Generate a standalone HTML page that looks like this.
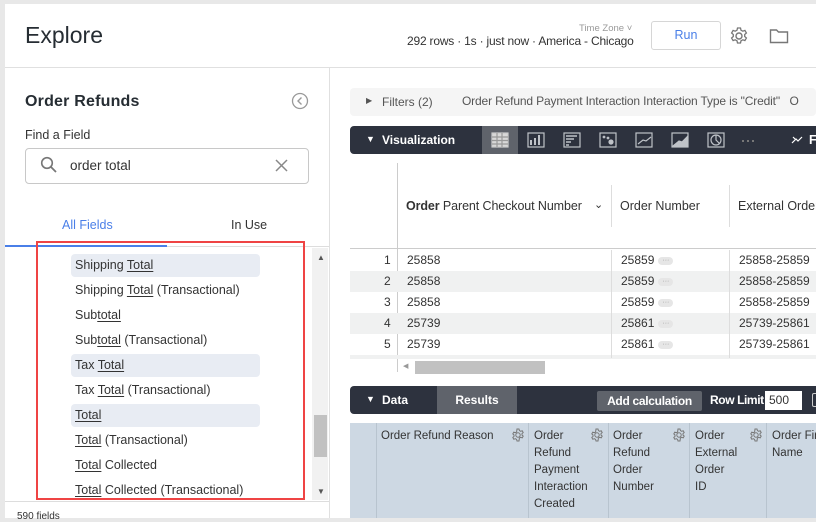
<!DOCTYPE html>
<html><head><style>
*{box-sizing:border-box;margin:0;padding:0}
body{width:816px;height:518px;overflow:hidden;background:#e8e8e8;font-family:"Liberation Sans",sans-serif;color:#262d33;position:relative}
.a{position:absolute;white-space:nowrap}
.dark{background:#2d323e;color:#fff;border-radius:4px}
.u{text-decoration:underline;text-underline-offset:2px}
.it{position:absolute;left:71px;width:189px;height:23px;line-height:23px;padding-left:4px;font-size:12.5px;color:#333;border-radius:4px}
.hl{background:#e8ecf3}
.row{position:absolute;left:350px;width:466px;height:21px;font-size:12px;color:#333;line-height:21px}
.row span{position:absolute}
.dots{display:inline-block;width:15px;height:8px;background:#e6e6e6;border-radius:4px;margin-left:4px;vertical-align:middle;font-size:7px;line-height:7px;text-align:center;color:#999}
.dh{position:absolute;top:428px;font-size:11.5px;line-height:17px;color:#333;white-space:nowrap}
.g{position:absolute;top:428px}
</style></head><body>
<div class="a" style="left:5px;top:4px;width:811px;height:514px;background:#fff"></div>
<div class="a" style="left:5px;top:67px;width:811px;height:1px;background:#e0e0e0"></div>
<div class="a" style="left:25px;top:22px;font-size:23px;color:#262d33">Explore</div>
<div class="a" style="left:579px;top:23px;font-size:9.5px;color:#9a9a9a">Time Zone ˅</div>
<div class="a" style="left:407px;top:34px;font-size:12px;letter-spacing:-.2px;color:#333">292 rows · 1s · just now · America - Chicago</div>
<div class="a" style="left:651px;top:21px;width:70px;height:29px;border:1px solid #d6d6d6;border-radius:3px;color:#4a7fe8;font-size:12.5px;text-align:center;line-height:27px">Run</div>
<svg class="a" style="left:729px;top:26px" width="20" height="20" viewBox="0 0 20 20"><circle cx="10" cy="10" r="3" fill="none" stroke="#777" stroke-width="1.4"/><path d="M8.5 2h3l.5 2.2 1.8 1 2.1-.8 1.5 2.6-1.7 1.5v2l1.7 1.5-1.5 2.6-2.1-.8-1.8 1-.5 2.2h-3l-.5-2.2-1.8-1-2.1.8-1.5-2.6 1.7-1.5v-2L2.6 7l1.5-2.6 2.1.8 1.8-1z" fill="none" stroke="#777" stroke-width="1.3"/></svg>
<svg class="a" style="left:769px;top:28px" width="20" height="16" viewBox="0 0 20 16"><path d="M1.5 2h6l2 2h9v10.5h-17z" fill="none" stroke="#777" stroke-width="1.4"/></svg>

<!-- left panel -->
<div class="a" style="left:329px;top:68px;width:1px;height:450px;background:#e0e0e0"></div>
<div class="a" style="left:25px;top:93px;font-size:16px;font-weight:bold;color:#262d33;letter-spacing:.2px">Order Refunds</div>
<svg class="a" style="left:291px;top:92px" width="18" height="18" viewBox="0 0 18 18"><circle cx="9" cy="9" r="7.5" fill="none" stroke="#999" stroke-width="1.3"/><path d="M10.5 5.5 7 9l3.5 3.5" fill="none" stroke="#999" stroke-width="1.4"/></svg>
<div class="a" style="left:25px;top:128px;font-size:12.5px;color:#333">Find a Field</div>
<div class="a" style="left:25px;top:148px;width:284px;height:36px;border:1px solid #c8c8c8;border-radius:4px"></div>
<svg class="a" style="left:40px;top:156px" width="18" height="18" viewBox="0 0 18 18"><circle cx="7" cy="7" r="5.3" fill="none" stroke="#777" stroke-width="1.6"/><path d="M11 11l5 5" stroke="#777" stroke-width="1.8"/></svg>
<div class="a" style="left:70px;top:158px;font-size:13.5px;color:#333">order total</div>
<svg class="a" style="left:275px;top:159px" width="13" height="13" viewBox="0 0 13 13"><path d="M1 1l11 11M12 1 1 12" stroke="#888" stroke-width="1.5"/></svg>
<div class="a" style="left:62px;top:218px;font-size:12.5px;color:#4a7fe8">All Fields</div>
<div class="a" style="left:231px;top:218px;font-size:12.5px;color:#333">In Use</div>
<div class="a" style="left:5px;top:246px;width:324px;height:1px;background:#ddd"></div>
<div class="a" style="left:5px;top:245px;width:162px;height:2px;background:#4a7fe8"></div>
<div class="a" style="left:312px;top:248px;width:16px;height:252px;background:#f1f1f1"></div>
<div class="a" style="left:314px;top:415px;width:13px;height:42px;background:#c1c1c1"></div>
<div class="a" style="left:317px;top:253px;font-size:8px;color:#555">▲</div>
<div class="a" style="left:317px;top:487px;font-size:8px;color:#555">▼</div>
<div class="it hl" style="top:254px">Shipping <span class="u">Total</span></div>
<div class="it" style="top:279px">Shipping <span class="u">Total</span> (Transactional)</div>
<div class="it" style="top:304px">Sub<span class="u">total</span></div>
<div class="it" style="top:329px">Sub<span class="u">total</span> (Transactional)</div>
<div class="it hl" style="top:354px">Tax <span class="u">Total</span></div>
<div class="it" style="top:379px">Tax <span class="u">Total</span> (Transactional)</div>
<div class="it hl" style="top:404px"><span class="u">Total</span></div>
<div class="it" style="top:429px"><span class="u">Total</span> (Transactional)</div>
<div class="it" style="top:454px"><span class="u">Total</span> Collected</div>
<div class="it" style="top:479px"><span class="u">Total</span> Collected (Transactional)</div>
<div class="a" style="left:36px;top:241px;width:269px;height:259px;border:2px solid #ef4444"></div>
<div class="a" style="left:5px;top:501px;width:324px;height:1px;background:#ddd"></div>
<div class="a" style="left:17px;top:511px;font-size:10px;color:#333">590 fields</div>

<!-- right -->
<div class="a" style="left:350px;top:88px;width:466px;height:28px;background:#f5f5f5;border-radius:4px"></div>
<div class="a" style="left:366px;top:96px;font-size:8px;color:#555">▶</div>
<div class="a" style="left:382px;top:95px;font-size:12px;color:#555">Filters (2)</div>
<div class="a" style="left:462px;top:94px;font-size:12px;letter-spacing:-.15px;color:#555">Order Refund Payment Interaction Interaction Type is "Credit"&nbsp;&nbsp;&nbsp;O</div>
<div class="a dark" style="left:350px;top:126px;width:480px;height:28px"></div>
<div class="a" style="left:366px;top:134px;font-size:9px;color:#fff">▼</div>
<div class="a" style="left:382px;top:133px;font-size:12px;font-weight:bold;color:#fff">Visualization</div>
<div class="a" style="left:482px;top:126px;width:36px;height:28px;background:#5f636b"></div>
<svg class="a" style="left:490px;top:131px" width="320" height="18" viewBox="0 0 320 18">
<g fill="none" stroke="#bfc3c8" stroke-width="1.2">
<rect x="2" y="2" width="16" height="14" fill="#d8d8d8" stroke="#ccc"/>
<path d="M2 6h16M2 9.5h16M2 13h16M7 2v14M12 2v14" stroke="#999"/>
<rect x="38" y="2" width="16" height="14"/><path d="M41 14V9M45 14V7M49 14V4" stroke-width="2"/>
<rect x="74" y="2" width="16" height="14"/><path d="M76 5h11M76 8h8M76 11h5M76 14h3" stroke-width="1.5"/>
<rect x="110" y="2" width="16" height="14"/><circle cx="114" cy="6" r=".8"/><circle cx="118" cy="7" r=".8"/><circle cx="121" cy="11" r="2" fill="#bfc3c8"/>
<rect x="146" y="2" width="16" height="14"/><path d="M148 13l5-4 3 1 5-4"/>
<rect x="182" y="2" width="16" height="14"/><path d="M183 15l6-5 3 1 5-5v9z" fill="#bfc3c8"/>
<rect x="218" y="2" width="16" height="14"/><circle cx="226" cy="9" r="5"/><path d="M226 4v5l3.5 3.5"/>
<path d="M252 10h2M257 10h2M262 10h2" stroke-width="2" stroke="#777"/>
<path d="M302 12l4-4 2 2 4-4M303 6l2 2" stroke="#fff"/>
</g></svg>
<div class="a" style="left:809px;top:133px;font-size:12.5px;font-weight:bold;color:#fff">F</div>

<div class="a" style="left:397px;top:163px;width:1px;height:209px;background:#ccc"></div>
<div class="a" style="left:611px;top:185px;width:1px;height:42px;background:#ddd"></div>
<div class="a" style="left:729px;top:185px;width:1px;height:42px;background:#ddd"></div>
<div class="a" style="left:406px;top:199px;font-size:12.5px;letter-spacing:-.1px;color:#333"><b>Order</b> Parent Checkout Number</div>
<div class="a" style="left:594px;top:198px;font-size:11px;color:#333">⌄</div>
<div class="a" style="left:620px;top:199px;font-size:12.5px;color:#333">Order Number</div>
<div class="a" style="left:738px;top:199px;font-size:12.5px;color:#333">External Order</div>
<div class="a" style="left:350px;top:248px;width:466px;height:1px;background:#ccc"></div>
<div class="row" style="top:250px"><span style="left:34px">1</span><span style="left:57px">25858</span><span style="left:271px">25859<i class="dots">···</i></span><span style="left:389px">25858-25859</span></div>
<div class="row" style="top:271px;background:#f0f1f1"><span style="left:34px">2</span><span style="left:57px">25858</span><span style="left:271px">25859<i class="dots">···</i></span><span style="left:389px">25858-25859</span></div>
<div class="row" style="top:292px"><span style="left:34px">3</span><span style="left:57px">25858</span><span style="left:271px">25859<i class="dots">···</i></span><span style="left:389px">25858-25859</span></div>
<div class="row" style="top:313px;background:#f0f1f1"><span style="left:34px">4</span><span style="left:57px">25739</span><span style="left:271px">25861<i class="dots">···</i></span><span style="left:389px">25739-25861</span></div>
<div class="row" style="top:334px"><span style="left:34px">5</span><span style="left:57px">25739</span><span style="left:271px">25861<i class="dots">···</i></span><span style="left:389px">25739-25861</span></div>
<div class="a" style="left:350px;top:355px;width:466px;height:4px;background:#f0f1f1"></div>
<div class="a" style="left:611px;top:250px;width:1px;height:108px;background:#ddd"></div>
<div class="a" style="left:729px;top:250px;width:1px;height:108px;background:#ddd"></div>
<div class="a" style="left:403px;top:362px;font-size:7px;color:#999">◀</div>
<div class="a" style="left:415px;top:361px;width:130px;height:13px;background:#c1c1c1"></div>

<div class="a dark" style="left:350px;top:386px;width:480px;height:28px"></div>
<div class="a" style="left:366px;top:394px;font-size:9px;color:#fff">▼</div>
<div class="a" style="left:382px;top:393px;font-size:12px;font-weight:bold;color:#fff">Data</div>
<div class="a" style="left:437px;top:386px;width:80px;height:28px;background:#5f636b;color:#fff;font-size:12px;font-weight:bold;text-align:center;line-height:28px">Results</div>
<div class="a" style="left:597px;top:391px;width:105px;height:20px;background:#5f636b;color:#fff;font-size:12px;letter-spacing:-.3px;font-weight:bold;text-align:center;line-height:20px;border-radius:2px">Add calculation</div>
<div class="a" style="left:710px;top:393px;font-size:12px;letter-spacing:-.4px;font-weight:bold;color:#fff">Row Limit</div>
<div class="a" style="left:765px;top:391px;width:37px;height:19px;background:#fff;color:#333;font-size:12px;line-height:19px;padding-left:4px">500</div>
<div class="a" style="left:812px;top:393px;width:6px;height:14px;border:1px solid #ccc;border-radius:2px"></div>

<div class="a" style="left:350px;top:423px;width:466px;height:95px;background:#cdd8e3"></div>
<div class="a" style="left:376px;top:423px;width:1px;height:95px;background:#b8c4cf"></div>
<div class="a" style="left:528px;top:423px;width:1px;height:95px;background:#b8c4cf"></div>
<div class="a" style="left:608px;top:423px;width:1px;height:95px;background:#b8c4cf"></div>
<div class="a" style="left:689px;top:423px;width:1px;height:95px;background:#b8c4cf"></div>
<div class="a" style="left:766px;top:423px;width:1px;height:95px;background:#b8c4cf"></div>
<div class="dh" style="left:381px">Order Refund Reason</div>
<div class="dh" style="left:534px">Order<br>Refund<br>Payment<br>Interaction<br>Created</div>
<div class="dh" style="left:613px">Order<br>Refund<br>Order<br>Number</div>
<div class="dh" style="left:695px">Order<br>External<br>Order<br>ID</div>
<div class="dh" style="left:772px">Order Fir<br>Name</div>
<svg width="0" height="0" style="position:absolute"><defs><g id="gear"><circle cx="7" cy="7" r="2.2" fill="none" stroke="#777" stroke-width="1"/><path d="M6 1h2l.4 1.6 1.3.7 1.5-.6 1 1.8-1.2 1.1v1.4l1.2 1.1-1 1.8-1.5-.6-1.3.7L8 13H6l-.4-1.6-1.3-.7-1.5.6-1-1.8L3 8.4V7L1.8 5.9l1-1.8 1.5.6 1.3-.7z" fill="none" stroke="#777" stroke-width="1"/></g></defs></svg>
<svg class="g" style="left:511px" width="14" height="14"><use href="#gear"/></svg>
<svg class="g" style="left:590px" width="14" height="14"><use href="#gear"/></svg>
<svg class="g" style="left:672px" width="14" height="14"><use href="#gear"/></svg>
<svg class="g" style="left:749px" width="14" height="14"><use href="#gear"/></svg>
</body></html>
